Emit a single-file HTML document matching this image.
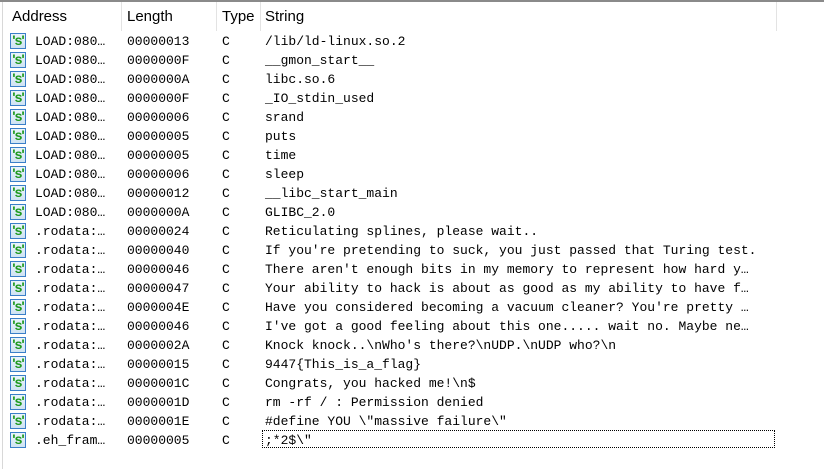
<!DOCTYPE html>
<html><head><style>
body{margin:0;width:824px;height:469px;background:#fff;overflow:hidden;position:relative;font-family:"Liberation Mono",monospace;font-size:13px;color:#000}
.top{position:absolute;left:0;top:0;width:824px;height:2px;background:#8a8a8a}
.left{position:absolute;left:2px;top:2px;width:1px;height:467px;background:#d8d8d8}
.hdr{position:absolute;top:2px;height:29px;font-family:"Liberation Sans",sans-serif;font-size:15px;line-height:30px}
.sep{position:absolute;top:2px;height:29px;width:1px;background:#e3e3e3}
.row{position:absolute;left:0;height:19px;line-height:19px;white-space:pre}
.row span{position:absolute;top:0}
.ic{position:absolute;left:10px;top:1px;width:16px;height:16px;border:1px solid #3a7fc8;box-sizing:border-box;background:linear-gradient(#eaf4fb,#cfe3f3);font-family:"Liberation Sans",sans-serif;font-weight:bold;color:#1f9a1f;font-size:14px;line-height:13px;text-align:center;letter-spacing:-1px}
.focus{position:absolute;left:262px;top:430px;width:513px;height:18px;border:1px dotted #000;box-sizing:border-box}
</style></head><body>
<div class="top"></div>
<div class="left"></div>
<div class="hdr" style="left:12px">Address</div>
<div class="hdr" style="left:127px">Length</div>
<div class="hdr" style="left:222px">Type</div>
<div class="hdr" style="left:265px">String</div>
<div class="sep" style="left:121px"></div>
<div class="sep" style="left:216px"></div>
<div class="sep" style="left:260px"></div>
<div class="sep" style="left:776px"></div>
<div class="focus"></div>
<div class="row" style="top:32px"><div class="ic">'s'</div><span style="left:35px">LOAD:080…</span><span style="left:127px">00000013</span><span style="left:222px">C</span><span style="left:265px">/lib/ld-linux.so.2</span></div>
<div class="row" style="top:51px"><div class="ic">'s'</div><span style="left:35px">LOAD:080…</span><span style="left:127px">0000000F</span><span style="left:222px">C</span><span style="left:265px">__gmon_start__</span></div>
<div class="row" style="top:70px"><div class="ic">'s'</div><span style="left:35px">LOAD:080…</span><span style="left:127px">0000000A</span><span style="left:222px">C</span><span style="left:265px">libc.so.6</span></div>
<div class="row" style="top:89px"><div class="ic">'s'</div><span style="left:35px">LOAD:080…</span><span style="left:127px">0000000F</span><span style="left:222px">C</span><span style="left:265px">_IO_stdin_used</span></div>
<div class="row" style="top:108px"><div class="ic">'s'</div><span style="left:35px">LOAD:080…</span><span style="left:127px">00000006</span><span style="left:222px">C</span><span style="left:265px">srand</span></div>
<div class="row" style="top:127px"><div class="ic">'s'</div><span style="left:35px">LOAD:080…</span><span style="left:127px">00000005</span><span style="left:222px">C</span><span style="left:265px">puts</span></div>
<div class="row" style="top:146px"><div class="ic">'s'</div><span style="left:35px">LOAD:080…</span><span style="left:127px">00000005</span><span style="left:222px">C</span><span style="left:265px">time</span></div>
<div class="row" style="top:165px"><div class="ic">'s'</div><span style="left:35px">LOAD:080…</span><span style="left:127px">00000006</span><span style="left:222px">C</span><span style="left:265px">sleep</span></div>
<div class="row" style="top:184px"><div class="ic">'s'</div><span style="left:35px">LOAD:080…</span><span style="left:127px">00000012</span><span style="left:222px">C</span><span style="left:265px">__libc_start_main</span></div>
<div class="row" style="top:203px"><div class="ic">'s'</div><span style="left:35px">LOAD:080…</span><span style="left:127px">0000000A</span><span style="left:222px">C</span><span style="left:265px">GLIBC_2.0</span></div>
<div class="row" style="top:222px"><div class="ic">'s'</div><span style="left:35px">.rodata:…</span><span style="left:127px">00000024</span><span style="left:222px">C</span><span style="left:265px">Reticulating splines, please wait..</span></div>
<div class="row" style="top:241px"><div class="ic">'s'</div><span style="left:35px">.rodata:…</span><span style="left:127px">00000040</span><span style="left:222px">C</span><span style="left:265px">If you're pretending to suck, you just passed that Turing test.</span></div>
<div class="row" style="top:260px"><div class="ic">'s'</div><span style="left:35px">.rodata:…</span><span style="left:127px">00000046</span><span style="left:222px">C</span><span style="left:265px">There aren't enough bits in my memory to represent how hard y…</span></div>
<div class="row" style="top:279px"><div class="ic">'s'</div><span style="left:35px">.rodata:…</span><span style="left:127px">00000047</span><span style="left:222px">C</span><span style="left:265px">Your ability to hack is about as good as my ability to have f…</span></div>
<div class="row" style="top:298px"><div class="ic">'s'</div><span style="left:35px">.rodata:…</span><span style="left:127px">0000004E</span><span style="left:222px">C</span><span style="left:265px">Have you considered becoming a vacuum cleaner? You're pretty …</span></div>
<div class="row" style="top:317px"><div class="ic">'s'</div><span style="left:35px">.rodata:…</span><span style="left:127px">00000046</span><span style="left:222px">C</span><span style="left:265px">I've got a good feeling about this one..... wait no. Maybe ne…</span></div>
<div class="row" style="top:336px"><div class="ic">'s'</div><span style="left:35px">.rodata:…</span><span style="left:127px">0000002A</span><span style="left:222px">C</span><span style="left:265px">Knock knock..\nWho's there?\nUDP.\nUDP who?\n</span></div>
<div class="row" style="top:355px"><div class="ic">'s'</div><span style="left:35px">.rodata:…</span><span style="left:127px">00000015</span><span style="left:222px">C</span><span style="left:265px">9447{This_is_a_flag}</span></div>
<div class="row" style="top:374px"><div class="ic">'s'</div><span style="left:35px">.rodata:…</span><span style="left:127px">0000001C</span><span style="left:222px">C</span><span style="left:265px">Congrats, you hacked me!\n$</span></div>
<div class="row" style="top:393px"><div class="ic">'s'</div><span style="left:35px">.rodata:…</span><span style="left:127px">0000001D</span><span style="left:222px">C</span><span style="left:265px">rm -rf / : Permission denied</span></div>
<div class="row" style="top:412px"><div class="ic">'s'</div><span style="left:35px">.rodata:…</span><span style="left:127px">0000001E</span><span style="left:222px">C</span><span style="left:265px">#define YOU \"massive failure\"</span></div>
<div class="row" style="top:431px"><div class="ic">'s'</div><span style="left:35px">.eh_fram…</span><span style="left:127px">00000005</span><span style="left:222px">C</span><span style="left:265px">;*2$\"</span></div>
</body></html>
